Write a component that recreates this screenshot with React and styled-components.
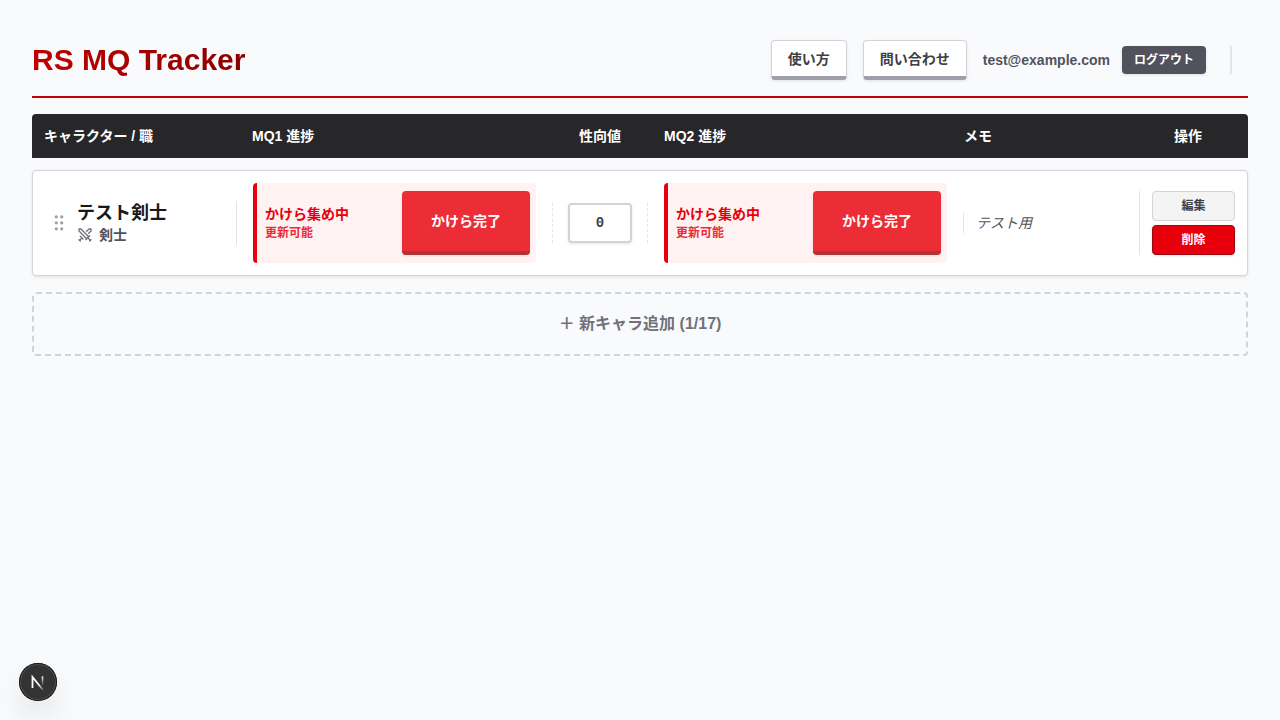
import React, { useState } from "react";
import styled, { createGlobalStyle } from "styled-components";
import { LuSwords } from "react-icons/lu";

const characters = [
  {
    id: 1,
    name: "テスト剣士",
    job: "剣士",
    mq1: { title: "かけら集め中", note: "更新可能", action: "かけら完了" },
    mq2: { title: "かけら集め中", note: "更新可能", action: "かけら完了" },
    alignment: "0",
    memo: "テスト用",
  },
];

const MAX_CHARACTERS = 17;

function Progress({ quest }) {
  return (
    <QuestBox>
      <div>
        <QuestTitle>{quest.title}</QuestTitle>
        <QuestNote>{quest.note}</QuestNote>
      </div>
      <QuestButton type="button">{quest.action}</QuestButton>
    </QuestBox>
  );
}

function CharacterRow({ character }) {
  const [alignment, setAlignment] = useState(character.alignment);

  return (
    <Row>
      <NameCell>
        <DragHandle type="button" aria-label="並び替え">
          <svg width="20" height="20" viewBox="0 0 20 20" fill="currentColor">
            <circle cx="7.3" cy="3.8" r="1.65" />
            <circle cx="12.7" cy="3.8" r="1.65" />
            <circle cx="7.3" cy="9.8" r="1.65" />
            <circle cx="12.7" cy="9.8" r="1.65" />
            <circle cx="7.3" cy="15.8" r="1.65" />
            <circle cx="12.7" cy="15.8" r="1.65" />
          </svg>
        </DragHandle>
        <div>
          <Name>{character.name}</Name>
          <Job>
            <LuSwords size={16} />
            {character.job}
          </Job>
        </div>
      </NameCell>
      <Progress quest={character.mq1} />
      <AlignmentCell>
        <AlignmentInput
          type="text"
          inputMode="numeric"
          aria-label="性向値"
          value={alignment}
          onChange={(e) => setAlignment(e.target.value)}
        />
      </AlignmentCell>
      <Progress quest={character.mq2} />
      <Memo>{character.memo}</Memo>
      <Actions>
        <SmallButton type="button">編集</SmallButton>
        <SmallButton type="button" $danger>
          削除
        </SmallButton>
      </Actions>
    </Row>
  );
}

function App() {
  return (
    <>
      <GlobalStyle />
      <Page>
        <Header>
          <Title>RS MQ Tracker</Title>
          <Nav>
            <NavButton type="button">使い方</NavButton>
            <NavButton type="button">問い合わせ</NavButton>
            <Account>
              <Email>test@example.com</Email>
              <LogoutButton type="button">ログアウト</LogoutButton>
            </Account>
            <Divider />
          </Nav>
        </Header>
        <main>
          <TableHead>
            <span>キャラクター / 職</span>
            <span>MQ1 進捗</span>
            <HeadCenter>性向値</HeadCenter>
            <span>MQ2 進捗</span>
            <span>メモ</span>
            <HeadCenter>操作</HeadCenter>
          </TableHead>
          <List>
            {characters.map((character) => (
              <CharacterRow key={character.id} character={character} />
            ))}
          </List>
          <AddButton type="button">
            ＋ 新キャラ追加 ({characters.length}/{MAX_CHARACTERS})
          </AddButton>
        </main>
      </Page>
      <DevBadge type="button" aria-label="Dev Tools">
        <svg width="38" height="38" viewBox="0 0 38 38" fill="none">
          <defs>
            <linearGradient id="stem" x1="0" y1="13" x2="0" y2="23" gradientUnits="userSpaceOnUse">
              <stop stopColor="#fff" />
              <stop offset="1" stopColor="#fff" stopOpacity="0" />
            </linearGradient>
            <linearGradient id="slash" x1="20" y1="21" x2="25" y2="27" gradientUnits="userSpaceOnUse">
              <stop stopColor="#fff" />
              <stop offset="1" stopColor="#fff" stopOpacity="0.1" />
            </linearGradient>
          </defs>
          <path d="M13.5 25V14L24 27" stroke="url(#slash)" strokeWidth="1.8" />
          <path d="M23.5 13.3V22.5" stroke="url(#stem)" strokeWidth="1.6" />
        </svg>
      </DevBadge>
    </>
  );
}

const GlobalStyle = createGlobalStyle`
  * {
    box-sizing: border-box;
  }
  body {
    margin: 0;
    background-color: #f9fafc;
    color: #18181b;
    font-family: "Liberation Sans", "Noto Sans CJK JP", sans-serif;
    font-size: 14px;
    line-height: 20px;
  }
  button,
  input {
    margin: 0;
    font: inherit;
  }
  button {
    cursor: pointer;
  }
`;

const Page = styled.div`
  padding: 32px;
`;

const Header = styled.header`
  display: flex;
  align-items: center;
  justify-content: space-between;
  margin-bottom: 16px;
  padding: 8px 0 16px;
  border-bottom: 2px solid #c10007;
`;

const Title = styled.h1`
  margin: 0;
  font-size: 30px;
  line-height: 36px;
  font-weight: 700;
  color: transparent;
  background: linear-gradient(to right, #c10000, #8b0000);
  background-clip: text;
`;

const Nav = styled.nav`
  display: flex;
  align-items: center;
  gap: 16px;
  padding-right: 16px;
`;

const NavButton = styled.button`
  height: 40px;
  padding: 0 16px;
  border: 1px solid #d4d4d8;
  border-bottom: 4px solid #9f9fa9;
  border-radius: 4px;
  background-color: #fff;
  color: #3f3f46;
  font-weight: 700;
  box-shadow: 0 1px 3px rgba(0, 0, 0, 0.1);
`;

const Account = styled.div`
  display: flex;
  align-items: center;
  gap: 12px;
`;

const Email = styled.span`
  color: #52525c;
  font-weight: 700;
`;

const LogoutButton = styled.button`
  padding: 6px 12px;
  border: 0;
  border-radius: 4px;
  background-color: #52525c;
  color: #fff;
  font-size: 12px;
  line-height: 16px;
  font-weight: 700;
  box-shadow: 0 1px 3px rgba(0, 0, 0, 0.1);
`;

const Divider = styled.div`
  height: 28px;
  margin-left: 8px;
  border-left: 2px solid #e4e4e7;
`;

const Grid = styled.div`
  display: grid;
  grid-template-columns: 192px 1fr 96px 1fr 160px 96px;
  align-items: center;
  gap: 16px;
  padding: 12px;
`;

const TableHead = styled(Grid)`
  border-radius: 4px 4px 0 0;
  background-color: #27272a;
  color: #fff;
  font-weight: 700;
`;

const HeadCenter = styled.span`
  text-align: center;
`;

const List = styled.div`
  display: flex;
  flex-direction: column;
  gap: 12px;
  margin: 12px 0 16px;
`;

const Row = styled(Grid)`
  border: 1px solid #d4d4d8;
  border-radius: 4px;
  background-color: #fff;
  box-shadow: 0 1px 3px rgba(0, 0, 0, 0.1);
`;

const NameCell = styled.div`
  display: flex;
  align-items: center;
  gap: 8px;
  padding-left: 4px;
  border-right: 1px solid #e4e4e7;
`;

const DragHandle = styled.button`
  display: flex;
  padding: 0;
  border: 0;
  background: none;
  color: #9f9fa9;
`;

const Name = styled.div`
  font-size: 18px;
  line-height: 24px;
  font-weight: 700;
`;

const Job = styled.div`
  display: flex;
  align-items: center;
  gap: 6px;
  color: #52525c;
  font-weight: 700;

  svg {
    color: #71717b;
  }
`;

const QuestBox = styled.div`
  display: flex;
  align-items: center;
  justify-content: space-between;
  height: 80px;
  padding: 8px 6px 8px 8px;
  border-left: 4px solid #e7000b;
  border-radius: 4px;
  background-color: #fef2f2;
`;

const QuestTitle = styled.div`
  color: #e7000b;
  font-weight: 700;
`;

const QuestNote = styled.div`
  color: #ec2d36;
  font-size: 12px;
  line-height: 18px;
  font-weight: 700;
`;

const QuestButton = styled.button`
  width: 128px;
  height: 64px;
  border: 0;
  border-bottom: 4px solid #af333a;
  border-radius: 4px;
  background-color: #ec2d36;
  color: #fff;
  font-weight: 700;
  box-shadow: 0 1px 3px rgba(0, 0, 0, 0.1);
`;

const AlignmentCell = styled.div`
  display: flex;
  justify-content: center;
  border: 1px dashed #e4e4e7;
  border-width: 0 1px;
`;

const AlignmentInput = styled.input`
  width: 64px;
  height: 40px;
  padding: 0;
  border: 2px solid #d4d4d8;
  border-radius: 4px;
  background-color: #fff;
  color: #3f3f46;
  font-family: "Liberation Mono", monospace;
  font-weight: 700;
  text-align: center;
  box-shadow: 0 1px 3px rgba(0, 0, 0, 0.1);
`;

const Memo = styled.div`
  padding-left: 12px;
  border-left: 1px solid #e4e4e7;
  color: #52525c;
  font-style: italic;
`;

const Actions = styled.div`
  display: flex;
  flex-direction: column;
  gap: 4px;
  padding-left: 12px;
  border-left: 1px solid #e4e4e7;
`;

const SmallButton = styled.button`
  padding: 6px 8px;
  border: 1px solid ${({ $danger }) => ($danger ? "#9f0712" : "#d4d4d8")};
  border-radius: 4px;
  background-color: ${({ $danger }) => ($danger ? "#e7000b" : "#f4f4f5")};
  color: ${({ $danger }) => ($danger ? "#fff" : "#3f3f46")};
  font-size: 12px;
  line-height: 16px;
  font-weight: 700;
  box-shadow: ${({ $danger }) =>
    $danger ? "0 1px 3px rgba(0, 0, 0, 0.1)" : "none"};
`;

const AddButton = styled.button`
  width: 100%;
  padding: 18px;
  border: 2px dashed #d4d4d8;
  border-radius: 4px;
  background: none;
  color: #71717b;
  font-size: 16px;
  line-height: 24px;
  font-weight: 700;
`;

const DevBadge = styled.button`
  position: fixed;
  left: 19px;
  bottom: 19px;
  display: flex;
  width: 38px;
  height: 38px;
  padding: 0;
  border: 0;
  border-radius: 50%;
  background-color: #333;
  box-shadow:
    inset 0 0 0 1px #171717,
    inset 0 0 0 2px rgba(255, 255, 255, 0.14),
    0 16px 32px -8px rgba(0, 0, 0, 0.24);
`;

export default App;
